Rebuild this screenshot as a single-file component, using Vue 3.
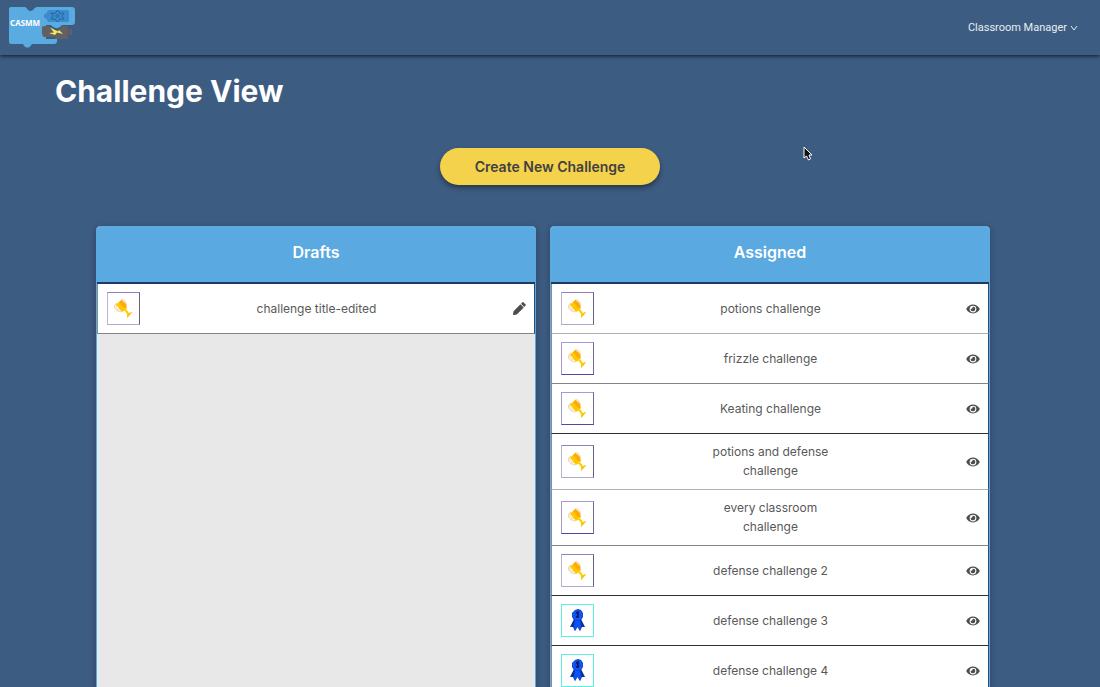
<script setup>
const drafts = [{ title: 'challenge title-edited', badge: 'cup', tone: 'soft', line: 'mid' }]
const assigned = [
  { title: 'potions challenge', badge: 'cup', tone: 'soft', line: 'light' },
  { title: 'frizzle challenge', badge: 'cup', tone: 'deep', line: 'mid' },
  { title: 'Keating challenge', badge: 'cup', tone: 'deep', line: 'dark' },
  { title: 'potions and defense challenge', badge: 'cup', tone: 'soft', line: 'light' },
  { title: 'every classroom challenge', badge: 'cup', tone: 'deep', line: 'mid' },
  { title: 'defense challenge 2', badge: 'cup', tone: 'soft', line: 'dark' },
  { title: 'defense challenge 3', badge: 'ribbon', tone: 'aqua', line: 'dark' },
  { title: 'defense challenge 4', badge: 'ribbon', tone: 'aqua', line: 'dark' }
]
const columns = [
  { name: 'Drafts', items: drafts, action: 'Edit' },
  { name: 'Assigned', items: assigned, action: 'View' }
]
</script>

<template>
  <div class="page">
    <header class="navbar">
      <a href="#" class="logo" aria-label="CASMM home">
        <svg width="68" height="44" viewBox="0 0 68 44">
          <path d="M3 1H17Q19 2 20 4Q22 6 25 4Q27 1 29 1H64Q67 1 67 4V16Q67 19 64 19H54Q51 23 48 22Q45 22 43 19H38V33H49V35Q49 38 46 38H24Q22 41 21 41.500H18Q16 41 15 38H3Q1 38 1 36V3Q1 1 3 1Z" fill="#5aabe2" />
          <path d="M41 4H59Q61 4 61 6V14Q61 16 59 16H41Q39 16 39 13Q36 13 36 10Q36 7 39 7Q39 4 41 4Z" fill="#3a8cce" />
          <g fill="none" stroke="#28649f" stroke-width="1">
            <path d="M49.500 4L52 7.500L56 7L54 10L56 13L52 13L49.500 16L47 13L43 13L45 10L43 7L47 7.500Z" />
            <circle cx="49.500" cy="10" r="1.500" />
          </g>
          <path d="M36 20H40Q43 21 44 22Q46 24 49 24Q53 23 54 20H60V33H48Q47 31 45 31H36Q34 30 34 27V22Q34 20 36 20Z" fill="#626064" />
          <path d="M61 23H63Q64 23 64 25V28Q64 29 61 29Z" fill="#626064" />
          <path d="M42 21.500L50 25.500L51 24L55 28L49 26.500L47 29L41 27L46 26.500Z" fill="#f6ed55" />
          <text x="2" y="20">CASMM</text>
        </svg>
      </a>
      <button type="button" class="menu">
        Classroom Manager
        <svg width="8" height="8" viewBox="0 0 8 8"><path d="M1 2L4 6L7 2" fill="none" stroke="currentColor" stroke-width="1" /></svg>
      </button>
    </header>

    <main>
      <h1>Challenge View</h1>
      <button type="button" class="create">Create New Challenge</button>
      <div class="columns">
        <section v-for="col in columns" :key="col.name" class="column">
          <h2>{{ col.name }}</h2>
          <ul>
            <li v-for="item in col.items" :key="item.title" :class="item.line">
              <span class="badge" :class="item.tone">
                <svg v-if="item.badge === 'cup'" width="21" height="21" viewBox="0 0 21 21">
                  <g fill="none" stroke="#f0cf9c" stroke-width="1">
                    <path d="M4 5C0 7 1 12 5 13C7 14 9 14 10 13" />
                    <path d="M4 7C2 8 3 11 6 12" />
                    <path d="M8 2C11 1 14 4 13 8" />
                  </g>
                  <path d="M8.500 2L3 6.500Q5 9 7 12Q9 14 11 13L14 10Q14 7 12 5Z" fill="#ffc800" />
                  <path d="M8.500 2L6 4L11 10L13 10Q14 7 12 5Z" fill="#ffa90a" />
                  <path d="M11 12L13 11L16 15L19 14L14 20L14 16Z" fill="#ffd000" />
                  <path d="M16 15.500L19.500 14L14 20Z" fill="#f8bb00" />
                </svg>
                <svg v-else width="15" height="23" viewBox="0 0 15 23">
                  <path d="M4 10L0 18L3 18L5 22L7.500 18L10 22L12 18L15 18L11 10Z" fill="#0b3495" />
                  <path d="M5 11L4 18L5 22L7.500 17L10 22L11 18L10 11Z" fill="#0b52ff" />
                  <path d="M5 1L8 0L11 1L13 4L13 8L11 11L8 12L4 11L2 8L2 4Z" fill="#0646e8" />
                  <circle cx="7.500" cy="6" r="4" fill="#1648df" stroke="#1766fa" stroke-width="1" />
                  <path d="M6 4L8 3V8M6 8H9" fill="none" stroke="#09185b" stroke-width="1.500" />
                </svg>
              </span>
              <span class="title">{{ item.title }}</span>
              <button type="button" class="action" :aria-label="`${col.action} ${item.title}`">
                <svg v-if="col.action === 'Edit'" width="13" height="13" viewBox="0 0 512 512" fill="currentColor">
                  <path d="M498 142L452 188Q444 195 435 188L324 77Q317 68 324 60L370 14Q390 -5 410 14L498 102Q517 122 498 142ZM284 100L22 362L0 484Q-2 512 28 512L150 490L412 228Q419 219 412 211L301 100Q292 93 284 100Z" />
                </svg>
                <svg v-else width="14" height="12" viewBox="0 0 576 512" fill="currentColor">
                  <path fill-rule="evenodd" d="M573 241C518 136 411 64 288 64S58 136 3 241a32 32 0 0 0 0 30c55 105 162 177 285 177s230-72 285-177a32 32 0 0 0 0-30zM288 400a144 144 0 1 1 144-144 144 144 0 0 1-144 144zm0-240a95 95 0 0 0-25 4 48 48 0 0 1-67 67 96 96 0 1 0 92-71z" />
                </svg>
              </button>
            </li>
          </ul>
        </section>
      </div>
    </main>

    <svg class="pointer" width="10" height="15" viewBox="0 0 10 15" aria-hidden="true">
      <path d="M1 1V12L3.500 10L5.500 14L7.500 13L6 9H9Z" fill="#111" stroke="#fff" stroke-width="1" />
    </svg>
  </div>
</template>

<style>
body {
  margin: 0;
  background: #3d5c82;
}
</style>

<style scoped>
.page {
  position: relative;
  height: 100vh;
  overflow: hidden;
  background: #3d5c82;
  color: #fff;
  font-family: Inter, "Liberation Sans", sans-serif;
}
button {
  border: 0;
  padding: 0;
  background: none;
  color: inherit;
  font-family: inherit;
  cursor: pointer;
}
svg {
  display: block;
}
.navbar {
  display: flex;
  align-items: center;
  justify-content: space-between;
  height: 55px;
  padding: 0 22px 0 8px;
  box-sizing: border-box;
  box-shadow: 0 1px 4px rgba(0, 0, 0, 0.75);
}
.logo text {
  fill: #fff;
  font: bold 8px "Noto Sans", sans-serif;
}
.menu {
  display: flex;
  align-items: center;
  gap: 3px;
  font-family: Roboto, sans-serif;
  font-size: 11px;
  line-height: 16px;
  color: #e8edf2;
}
h1 {
  margin: 0;
  padding: 16px 55px 0;
  font-size: 30px;
  line-height: 40px;
  font-weight: 700;
}
.create {
  display: block;
  width: 20%;
  height: 37px;
  margin: 37px auto 41px;
  border-radius: 19px;
  background: #f5d24b;
  color: #414141;
  font-size: 14px;
  font-weight: 600;
  box-shadow: 0 3px 5px rgba(0, 0, 0, 0.4);
}
.columns {
  display: grid;
  grid-template-columns: 1fr 1fr;
  gap: 14px;
  padding: 0 110px 0 96px;
}
.column {
  min-height: 600px;
  box-sizing: border-box;
  border: 1px solid #5aabe2;
  border-radius: 4px;
  background: #e8e8e8;
  box-shadow: 0 2px 6px rgba(0, 0, 0, 0.3);
}
h2 {
  margin: 0;
  padding: 14px 0 18px;
  background: #5aa9e0;
  border-radius: 3px 3px 0 0;
  font-size: 16px;
  line-height: 23px;
  font-weight: 600;
  text-align: center;
}
ul {
  margin: 0;
  padding: 0;
  list-style: none;
  border-top: 2px solid #1d3b63;
}
li {
  display: grid;
  grid-template-columns: 1fr 1fr 1fr;
  align-items: center;
  min-height: 50px;
  padding: 8px 8px 8px 9px;
  box-sizing: border-box;
  border: 1px solid #8d8d8d;
  border-top: 0;
  border-right-color: #33466f;
  background: #fff;
  color: #595959;
  font-size: 12px;
  line-height: 19px;
  text-align: center;
}
li.light {
  border-bottom-color: #b0b0b0;
}
li.mid {
  border-bottom-color: #858585;
}
li.dark {
  border-bottom-color: #303030;
}
.title {
  padding-bottom: 1px;
}
.badge {
  display: flex;
  align-items: center;
  justify-content: center;
  width: 33px;
  height: 33px;
  box-sizing: border-box;
  border: 1px solid;
}
.soft {
  border-color: #8e84bd #65607c #b1a9cf #bcb5d2;
}
.deep {
  border-color: #a598e0 #706b8b #5547a0 #a69bc8;
}
.aqua {
  border-color: #5eeee0;
}
.action {
  justify-self: end;
  color: #4d4d4d;
}
.pointer {
  position: absolute;
  left: 803px;
  top: 146px;
}
</style>
